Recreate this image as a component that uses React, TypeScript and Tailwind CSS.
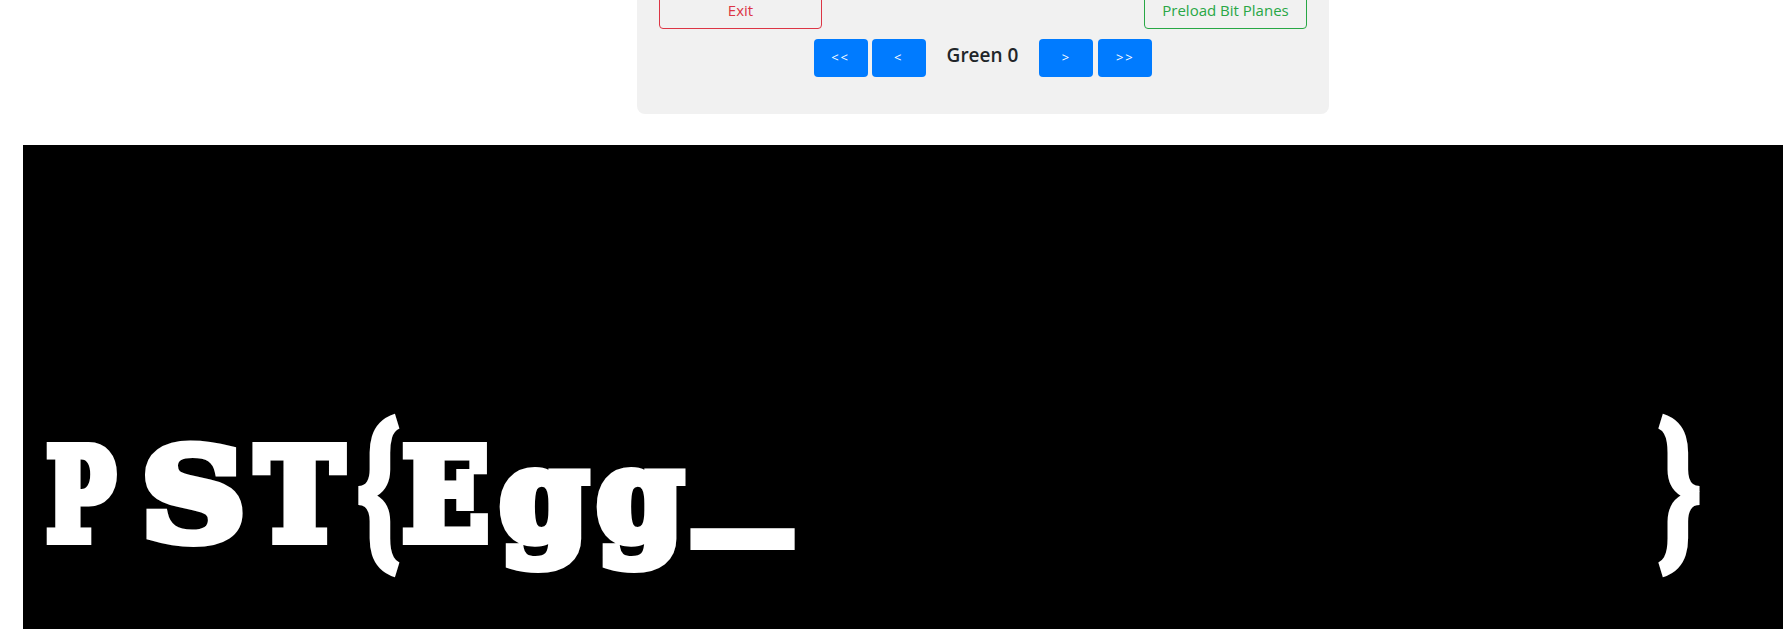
import React from "react";

function NavButton({ label }: { label: string }) {
  return (
    <button className="w-[54px] h-[38px] rounded-[4px] bg-[#007bff] text-white text-[13px] tracking-[2px] flex items-center justify-center font-['Open_Sans',sans-serif]">
      {label}
    </button>
  );
}

const cell = "flex justify-center";
const serif =
  "block font-['DejaVu_Serif_Condensed','DejaVu_Serif',serif] font-bold text-[127px] leading-none [-webkit-text-stroke:10px_white]";
const brace =
  "block font-['Roboto',sans-serif] font-black text-[171px] leading-[0] translate-y-[7px] scale-x-[0.84]";

export default function App() {
  return (
    <div className="w-[1783px] h-[629px] overflow-hidden bg-white font-['Open_Sans',sans-serif]">
      <div className="-mt-[9px] ml-[637px] w-[692px] bg-[#f1f1f1] rounded-b-lg px-[22px] pb-[37px]">
        <div className="flex justify-between">
          <button className="w-[163px] h-[38px] rounded-[4px] border border-[#dc3545] text-[#dc3545] text-[15px] flex items-center justify-center">
            Exit
          </button>
          <button className="w-[163px] h-[38px] rounded-[4px] border border-[#28a745] text-[#28a745] text-[15px] flex items-center justify-center">
            Preload Bit Planes
          </button>
        </div>
        <div className="mt-[10px] flex items-center justify-center">
          <NavButton label="<<" />
          <div className="w-[4px]" />
          <NavButton label="<" />
          <h5 className="mx-[21px] mb-[5px] text-[19px] font-semibold text-[#212529] leading-[1.2]">
            Green 0
          </h5>
          <NavButton label=">" />
          <div className="w-[5px]" />
          <NavButton label=">>" />
        </div>
      </div>
      <div className="mt-[31px] ml-[23px] h-[484px] bg-black pt-[287px] flex items-baseline text-white">
        <div className="flex items-baseline">
          <span className={`${cell} ml-[26px] w-[63px]`}>
            <span className={`${serif} scale-x-[0.8]`}>P</span>
          </span>
          <span className={`${cell} ml-[31px] w-[100px]`}>
            <span className={`${serif} scale-x-[1.25]`}>S</span>
          </span>
          <span className={`${cell} ml-[9px] w-[96px]`}>
            <span className={`${serif} scale-x-[1.02]`}>T</span>
          </span>
          <span className={`${cell} ml-[10px] w-[42px]`}>
            <span className={brace}>{"{"}</span>
          </span>
          <span className={`${cell} ml-[3px] w-[85px]`}>
            <span className={`${serif} scale-x-[0.99]`}>E</span>
          </span>
          <span className={`${cell} ml-[10px] w-[92px]`}>
            <span className={`${serif} scale-x-[1.1]`}>g</span>
          </span>
          <span className={`${cell} ml-[5px] w-[90px]`}>
            <span className={`${serif} scale-x-[1.075]`}>g</span>
          </span>
          <span className={`${cell} ml-[8px] w-[99px]`}>
            <span className={`${serif} [-webkit-text-stroke:0px] -translate-y-[25px] scale-x-[1.55]`}>_</span>
          </span>
        </div>
        <span className={`${cell} ml-auto mr-[82px] w-[45px]`}>
          <span className={brace}>{"}"}</span>
        </span>
      </div>
    </div>
  );
}
